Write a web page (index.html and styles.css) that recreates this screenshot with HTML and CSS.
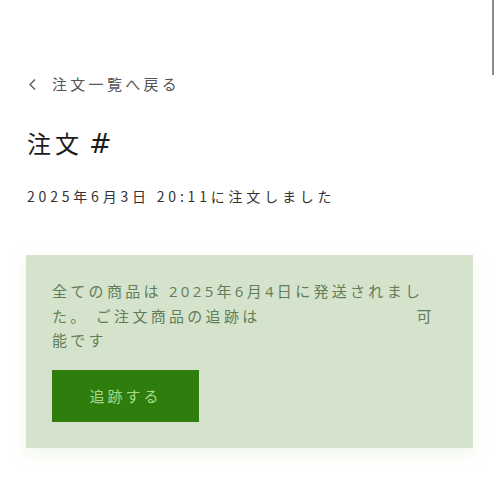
FILE: index.html
```html
<!DOCTYPE html>
<html lang="ja">
<head>
<meta charset="utf-8">
<link rel="stylesheet" href="styles.css">
</head>
<body>
<div class="scrollbar"></div>
<main class="page">
  <a class="back" href="#">
    <svg class="chev" width="9" height="13" viewBox="0 0 9 13"><polyline points="7,1.5 2,6.5 7,11.5" fill="none" stroke="#555" stroke-width="1.3"/></svg>
    <span class="back-text">注文一覧へ戻る</span>
  </a>
  <h1 class="title"><span>注文</span><span class="hash">#</span></h1>
  <p class="date">2025年6月3日 20:11に注文しました</p>
  <section class="notice">
    <div class="notice-text">
      <div class="line">全ての商品は 2025年6月4日に発送されまし</div>
      <div class="line split"><span>た。 ご注文商品の追跡は</span><span>可</span></div>
      <div class="line">能です</div>
    </div>
    <a class="track" href="#">追跡する</a>
  </section>
</main>
</body>
</html>
```

FILE: styles.css
```css
html, body {
  margin: 0;
  padding: 0;
  background: #ffffff;
}
body {
  font-family: "Noto Sans CJK JP", "Noto Sans", sans-serif;
  color: #333;
}
.scrollbar {
  position: fixed;
  top: 0;
  right: 6px;
  width: 2px;
  height: 75px;
  background: #8c8c8c;
}
.page {
  padding: 73px 27px 40px 26px;
}
.back {
  display: flex;
  align-items: center;
  height: 22px;
  text-decoration: none;
  color: #555;
  padding-left: 2px;
}
.chev {
  margin-right: 15px;
}
.back-text {
  font-size: 15px;
  letter-spacing: 3.3px;
  line-height: 22px;
}
.title {
  display: flex;
  align-items: baseline;
  margin: 32px 0 0 1px;
  font-size: 24px;
  line-height: 32px;
  font-weight: 400;
  letter-spacing: 4px;
  color: #1c1c1c;
}
.hash {
  font-family: "DejaVu Sans", sans-serif;
  font-size: 27px;
  margin-left: 6px;
}
.date {
  margin: 25px 0 0 1px;
  font-size: 14px;
  line-height: 22px;
  letter-spacing: 3.8px;
  color: #333;
}
.notice {
  margin-top: 48px;
  background: #d5e3cc;
  padding: 24px 35px 26px 26px;
  box-shadow: 0 6px 14px rgba(214, 232, 200, 0.35);
}
.notice-text {
  font-family: "Open Sans", "Noto Sans CJK JP", sans-serif;
  font-size: 15px;
  line-height: 24.5px;
  letter-spacing: 3.3px;
  color: #627e58;
}
.line {
  white-space: nowrap;
}
.split {
  display: flex;
  gap: 156px;
}
.track {
  display: flex;
  align-items: center;
  justify-content: center;
  margin-top: 17px;
  width: 147px;
  height: 52px;
  background: #2f7d0d;
  color: #a6d98a;
  font-size: 15px;
  letter-spacing: 3px;
  text-decoration: none;
}
```
